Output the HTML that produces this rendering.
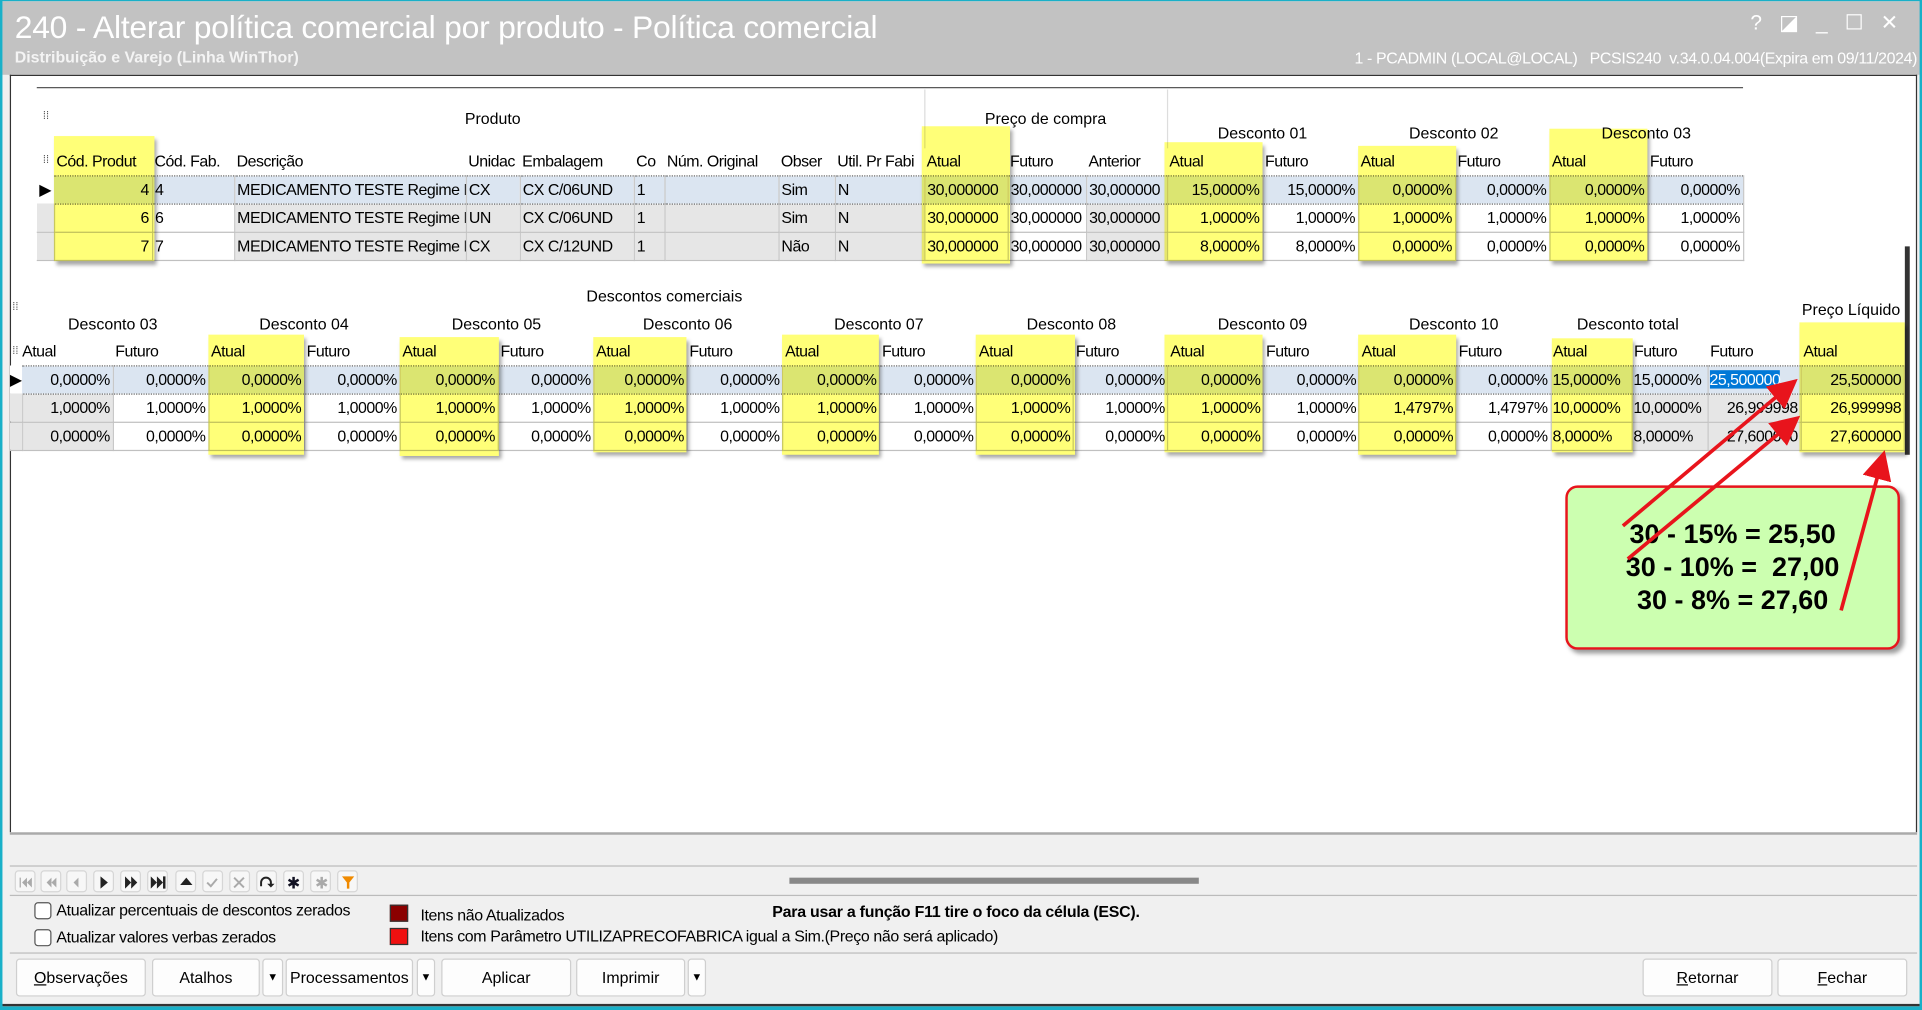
<!DOCTYPE html>
<html><head><meta charset="utf-8">
<style>
*{box-sizing:border-box;margin:0;padding:0}
html,body{width:1922px;height:1010px;overflow:hidden;background:#f0f0f0}
#w{position:absolute;left:0;top:0;width:1568px;height:824px;transform:scale(1.22577);transform-origin:0 0;background:#f0f0f0;font-family:"Liberation Sans Narrow","Liberation Sans",sans-serif;font-size:13px;color:#000;border-left:2px solid #19b0c8;border-right:2px solid #19b0c8;border-top:1px solid #19b0c8;border-bottom:3px solid #19b0c8;overflow:hidden}
.a{position:absolute}
#title{left:0;top:0;width:1568px;height:60px;background:#c2c2c2}
table{border-collapse:collapse;table-layout:fixed;position:absolute}
td{height:23px;border-right:1px solid #c8c8c8;border-bottom:1px solid #c0c0c0;padding:0 2px;white-space:nowrap;overflow:hidden;font-size:13px;letter-spacing:-0.4px}
td.r{text-align:right}
tr.h td{border:none;height:22px;padding-left:2px}
tr.s td{background:#dbe5f1;border-top:1px dotted #666;border-bottom:1px dotted #666}
td.g{background:#e6e6e6}
.y{position:absolute;background:#ffff78;mix-blend-mode:multiply;box-shadow:2px 3px 3px rgba(0,0,0,.35)}
.gh{position:absolute;font-size:13px;text-align:center}
.btn{position:absolute;top:781px;height:31px;background:#fdfdfd;border:1px solid #cfcfcf;border-radius:3px;text-align:center;line-height:29px;font-size:13px}
.nav{position:absolute;top:709px;width:17px;height:18px;border:1px solid #d6d6d6;border-radius:3px;background:#f7f7f7}
</style></head><body><div id="w">
<div id="title" class="a">
<div class="a" style="left:10px;top:6px;font-size:26px;color:#fff;letter-spacing:-0.2px">240 - Alterar política comercial por produto - Política comercial</div>
<div class="a" style="left:10px;top:38px;font-size:13px;color:#f4f4f4;font-weight:bold">Distribuição e Varejo (Linha WinThor)</div>
<div class="a" style="left:1426px;top:8px;font-size:17px;color:#fff;letter-spacing:14px">?◪_☐✕</div>
<div class="a" style="right:6px;top:39px;font-size:13px;color:#fff;letter-spacing:-0.3px">1 - PCADMIN (LOCAL@LOCAL) &nbsp; PCSIS240 &nbsp;v.34.0.04.004(Expira em 09/11/2024)</div>
</div>
<div class="a" style="left:6px;top:60px;width:1556px;height:618px;background:#fff;border:1px solid #333;border-bottom:none"></div>
<div class="a" style="left:1552px;top:200px;width:4px;height:170px;background:#333"></div>
<div class="a" style="left:28px;top:70px;width:1392px;height:1px;background:#555"></div>
<div class="a" style="left:33px;top:88px;font-size:9px;color:#555">⁞⁞</div>
<div class="a" style="left:33px;top:124px;font-size:9px;color:#555">⁞⁞</div>
<div class="gh" style="left:300px;top:88px;width:200px">Produto</div>
<div class="gh" style="left:752px;top:88px;width:198px">Preço de compra</div>
<div class="gh" style="left:950px;top:100px;width:156px">Desconto 01</div>
<div class="gh" style="left:1106px;top:100px;width:156px">Desconto 02</div>
<div class="gh" style="left:1262px;top:100px;width:158px">Desconto 03</div>
<div class="a" style="left:752px;top:72px;width:1px;height:48px;background:#ddd"></div>
<div class="a" style="left:950px;top:72px;width:1px;height:48px;background:#ddd"></div>
<table style="left:28px;top:120px;width:1392px">
<colgroup><col style="width:14px"><col style="width:80px"><col style="width:67px"><col style="width:189px"><col style="width:44px"><col style="width:93px"><col style="width:25px"><col style="width:93px"><col style="width:46px"><col style="width:73px"><col style="width:68px"><col style="width:64px"><col style="width:66px"><col style="width:78px"><col style="width:78px"><col style="width:79px"><col style="width:77px"><col style="width:80px"><col style="width:78px"></colgroup>
<tr class="h"><td></td><td>Cód. Produt</td><td>Cód. Fab.</td><td>Descrição</td><td>Unidac</td><td>Embalagem</td><td>Co</td><td>Núm. Original</td><td>Obser</td><td>Util. Pr Fabi</td><td>Atual</td><td>Futuro</td><td>Anterior</td><td>Atual</td><td>Futuro</td><td>Atual</td><td>Futuro</td><td>Atual</td><td>Futuro</td></tr>
<tr class="s"><td style="background:#fff;border:none">▶</td><td class="r">4</td><td>4</td><td>MEDICAMENTO TESTE Regime I</td><td>CX</td><td>CX C/06UND</td><td>1</td><td></td><td>Sim</td><td>N</td><td>30,000000</td><td>30,000000</td><td>30,000000</td><td class="r">15,0000%</td><td class="r">15,0000%</td><td class="r">0,0000%</td><td class="r">0,0000%</td><td class="r">0,0000%</td><td class="r">0,0000%</td></tr>
<tr><td class="g"></td><td class="r">6</td><td>6</td><td class="g">MEDICAMENTO TESTE Regime I</td><td class="g">UN</td><td class="g">CX C/06UND</td><td class="g">1</td><td class="g"></td><td class="g">Sim</td><td class="g">N</td><td>30,000000</td><td>30,000000</td><td class="g">30,000000</td><td class="r">1,0000%</td><td class="r">1,0000%</td><td class="r">1,0000%</td><td class="r">1,0000%</td><td class="r">1,0000%</td><td class="r">1,0000%</td></tr>
<tr><td class="g"></td><td class="r">7</td><td>7</td><td class="g">MEDICAMENTO TESTE Regime I</td><td class="g">CX</td><td class="g">CX C/12UND</td><td class="g">1</td><td class="g"></td><td class="g">Não</td><td class="g">N</td><td>30,000000</td><td>30,000000</td><td class="g">30,000000</td><td class="r">8,0000%</td><td class="r">8,0000%</td><td class="r">0,0000%</td><td class="r">0,0000%</td><td class="r">0,0000%</td><td class="r">0,0000%</td></tr>
</table>
<div class="y" style="left:42px;top:110px;width:82px;height:102px"></div>
<div class="y" style="left:750px;top:102px;width:72px;height:112px"></div>
<div class="y" style="left:948px;top:115px;width:80px;height:97px"></div>
<div class="y" style="left:1106px;top:118px;width:80px;height:94px"></div>
<div class="y" style="left:1262px;top:104px;width:80px;height:108px"></div>

<div class="a" style="left:8px;top:244px;font-size:9px;color:#555">⁞⁞</div>
<div class="a" style="left:8px;top:280px;font-size:9px;color:#555">⁞⁞</div>
<div class="gh" style="left:440px;top:233px;width:200px">Descontos comerciais</div>
<div class="gh" style="left:1420px;top:244px;width:172px;text-align:left;padding-left:48px">Preço Líquido</div>
<div class="gh" style="left:12px;top:256px;width:156px">Desconto 03</div>
<div class="gh" style="left:168px;top:256px;width:156px">Desconto 04</div>
<div class="gh" style="left:324px;top:256px;width:158px">Desconto 05</div>
<div class="gh" style="left:482px;top:256px;width:154px">Desconto 06</div>
<div class="gh" style="left:636px;top:256px;width:158px">Desconto 07</div>
<div class="gh" style="left:794px;top:256px;width:156px">Desconto 08</div>
<div class="gh" style="left:950px;top:256px;width:156px">Desconto 09</div>
<div class="gh" style="left:1106px;top:256px;width:156px">Desconto 10</div>
<div class="gh" style="left:1262px;top:256px;width:128px">Desconto total</div>
<table style="left:6px;top:275px;width:1546px">
<colgroup><col style="width:10px"><col style="width:74px"><col style="width:78px"><col style="width:78px"><col style="width:78px"><col style="width:80px"><col style="width:78px"><col style="width:76px"><col style="width:78px"><col style="width:79px"><col style="width:79px"><col style="width:79px"><col style="width:77px"><col style="width:78px"><col style="width:78px"><col style="width:79px"><col style="width:77px"><col style="width:66px"><col style="width:62px"><col style="width:76px"><col style="width:84px"></colgroup>
<tr class="h"><td></td><td style="padding-left:0">Atual</td><td>Futuro</td><td>Atual</td><td>Futuro</td><td>Atual</td><td>Futuro</td><td>Atual</td><td>Futuro</td><td>Atual</td><td>Futuro</td><td>Atual</td><td>Futuro</td><td>Atual</td><td>Futuro</td><td>Atual</td><td>Futuro</td><td>Atual</td><td>Futuro</td><td>Futuro</td><td>Atual</td></tr>
<tr class="s"><td style="background:#fff;border:none;padding:0">▶</td><td class="r">0,0000%</td><td class="r">0,0000%</td><td class="r">0,0000%</td><td class="r">0,0000%</td><td class="r">0,0000%</td><td class="r">0,0000%</td><td class="r">0,0000%</td><td class="r">0,0000%</td><td class="r">0,0000%</td><td class="r">0,0000%</td><td class="r">0,0000%</td><td class="r">0,0000%</td><td class="r">0,0000%</td><td class="r">0,0000%</td><td class="r">0,0000%</td><td class="r">0,0000%</td><td style="padding:0 1px">15,0000%</td><td style="padding:0 1px">15,0000%</td><td style="padding:0 1px"><span style="background:#0078d7;color:#fff">25,500000</span></td><td class="r">25,500000</td></tr>
<tr><td class="g"></td><td class="r g">1,0000%</td><td class="r">1,0000%</td><td class="r">1,0000%</td><td class="r">1,0000%</td><td class="r">1,0000%</td><td class="r">1,0000%</td><td class="r">1,0000%</td><td class="r">1,0000%</td><td class="r">1,0000%</td><td class="r">1,0000%</td><td class="r">1,0000%</td><td class="r">1,0000%</td><td class="r">1,0000%</td><td class="r">1,0000%</td><td class="r">1,4797%</td><td class="r">1,4797%</td><td style="padding:0 1px">10,0000%</td><td class="g" style="padding:0 1px">10,0000%</td><td class="r g">26,999998</td><td class="r">26,999998</td></tr>
<tr><td class="g"></td><td class="r g">0,0000%</td><td class="r">0,0000%</td><td class="r">0,0000%</td><td class="r">0,0000%</td><td class="r">0,0000%</td><td class="r">0,0000%</td><td class="r">0,0000%</td><td class="r">0,0000%</td><td class="r">0,0000%</td><td class="r">0,0000%</td><td class="r">0,0000%</td><td class="r">0,0000%</td><td class="r">0,0000%</td><td class="r">0,0000%</td><td class="r">0,0000%</td><td class="r">0,0000%</td><td style="padding:0 1px">8,0000%</td><td class="g" style="padding:0 1px">8,0000%</td><td class="r g">27,600000</td><td class="r">27,600000</td></tr>
</table>
<div class="y" style="left:168px;top:272px;width:78px;height:98px"></div>
<div class="y" style="left:324px;top:274px;width:81px;height:97px"></div>
<div class="y" style="left:482px;top:274px;width:76px;height:94px"></div>
<div class="y" style="left:636px;top:272px;width:79px;height:98px"></div>
<div class="y" style="left:794px;top:272px;width:81px;height:98px"></div>
<div class="y" style="left:948px;top:272px;width:80px;height:96px"></div>
<div class="y" style="left:1106px;top:272px;width:80px;height:98px"></div>
<div class="y" style="left:1264px;top:275px;width:66px;height:93px"></div>
<div class="y" style="left:1466px;top:262px;width:86px;height:106px"></div>

<div class="a" style="left:1275px;top:395px;width:273px;height:134px;background:#ccffb0;border:2px solid #e8141c;border-radius:10px;box-shadow:3px 3px 4px rgba(0,0,0,.4)"></div>
<div class="a" style="left:1275px;top:421px;width:273px;text-align:center;font-family:'Liberation Sans',sans-serif;font-weight:bold;font-size:22px;line-height:27px">30 - 15% = 25,50<br>30 - 10% = &nbsp;27,00<br>30 - 8% = 27,60</div>
<svg class="a" style="left:0;top:0" width="1568" height="824">
<defs><marker id="m" markerWidth="8" markerHeight="8" refX="6" refY="4" orient="auto"><path d="M0,0 L8,4 L0,8 z" fill="#e8141c"/></marker></defs>
<g stroke="#e8141c" stroke-width="3" fill="none" marker-end="url(#m)">
<line x1="1322" y1="428" x2="1460" y2="312"/>
<line x1="1326" y1="455" x2="1462" y2="342"/>
<line x1="1500" y1="497" x2="1534" y2="372"/>
</g></svg>

<div class="a" style="left:6px;top:678px;width:1556px;height:28px;background:#f0f0f0;border-top:2px solid #aaa;border-bottom:1px solid #bbb"></div>
<div class="a" style="left:642px;top:715px;width:334px;height:5px;background:#888"></div>
<div class="nav" style="left:10px"></div><div class="nav" style="left:31px"></div><div class="nav" style="left:52px"></div><div class="nav" style="left:74px"></div><div class="nav" style="left:96px"></div><div class="nav" style="left:118px"></div><div class="nav" style="left:141px"></div><div class="nav" style="left:163px"></div><div class="nav" style="left:185px"></div><div class="nav" style="left:207px"></div><div class="nav" style="left:229px"></div><div class="nav" style="left:251px"></div><div class="nav" style="left:273px"></div>
<svg class="a" style="left:0;top:709px" width="300" height="20">
<g fill="#aaa"><path d="M14 6v8h1V6zM16 10l4-4v8zM20 10l4-4v8z"/><path d="M36 10l4-4v8zM40 10l4-4v8z"/><path d="M58 10l4-4v8z"/></g>
<g fill="#222"><path d="M80 5l6 5-6 5z"/><path d="M100 5l5 5-5 5zM105 5l5 5-5 5z"/><path d="M121 5l5 5-5 5zM126 5l5 5-5 5zM131 5h2v10h-2z"/><path d="M145 12l5-6 5 6z"/></g>
<g stroke="#aaa" stroke-width="1.6" fill="none"><path d="M167 10l3 3 5-6"/><path d="M189 6l8 8M197 6l-8 8"/></g>
<path d="M211 13v-3a4 4 0 0 1 8 0v2" stroke="#222" stroke-width="1.6" fill="none"/><path d="M216 11l3 3 3-3z" fill="#222"/>
<text x="232" y="15" font-size="13" fill="#112">✱</text><text x="255" y="15" font-size="13" fill="#aaa">✱</text>
<path d="M277 5h10l-4 5v5h-2v-5z" fill="#f08a00"/>
</svg>
<div class="a" style="left:6px;top:729px;width:1556px;height:1px;background:#bbb"></div>
<div class="a" style="left:26px;top:735px;width:14px;height:14px;border:1px solid #555;border-radius:3px;background:#fff"></div>
<div class="a" style="left:44px;top:734px;letter-spacing:-0.3px">Atualizar percentuais de descontos zerados</div>
<div class="a" style="left:26px;top:757px;width:14px;height:14px;border:1px solid #555;border-radius:3px;background:#fff"></div>
<div class="a" style="left:44px;top:756px;letter-spacing:-0.3px">Atualizar valores verbas zerados</div>
<div class="a" style="left:316px;top:737px;width:15px;height:14px;background:#8b0000;border:1px solid #333"></div>
<div class="a" style="left:341px;top:738px;letter-spacing:-0.3px">Itens não Atualizados</div>
<div class="a" style="left:316px;top:756px;width:15px;height:14px;background:#f01010;border:1px solid #333"></div>
<div class="a" style="left:341px;top:755px;letter-spacing:-0.3px">Itens com Parâmetro UTILIZAPRECOFABRICA igual a Sim.(Preço não será aplicado)</div>
<div class="a" style="left:628px;top:735px;font-weight:bold;letter-spacing:-0.2px">Para usar a função F11 tire o foco da célula (ESC).</div>
<div class="a" style="left:6px;top:776px;width:1556px;height:1px;background:#bbb"></div>
<div class="btn" style="left:11px;width:106px"><u>O</u>bservações</div>
<div class="btn" style="left:122px;width:88px">Atalhos</div>
<div class="btn" style="left:212px;width:17px;font-size:9px">▼</div>
<div class="btn" style="left:231px;width:104px">Processamentos</div>
<div class="btn" style="left:338px;width:15px;font-size:9px">▼</div>
<div class="btn" style="left:358px;width:106px">Aplicar</div>
<div class="btn" style="left:468px;width:89px">Imprimir</div>
<div class="btn" style="left:559px;width:15px;font-size:9px">▼</div>
<div class="btn" style="left:1338px;width:106px"><u>R</u>etornar</div>
<div class="btn" style="left:1448px;width:106px"><u>F</u>echar</div>
<div class="a" style="left:0;top:818px;width:1568px;height:2px;background:#333"></div>
</div></body></html>
